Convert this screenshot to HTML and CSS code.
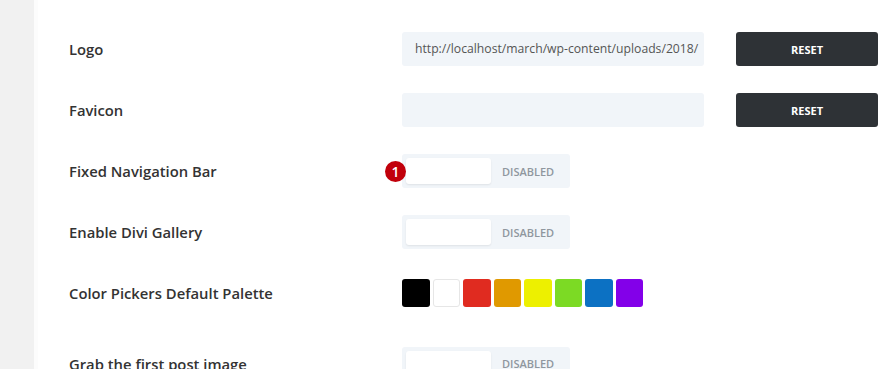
FILE: index.html
```html
<!DOCTYPE html>
<html lang="en">
<head>
  <meta charset="UTF-8">
  <title>Theme Options</title>
  <link rel="stylesheet" href="styles.css">
</head>
<body>
  <div class="layout">
    <div class="sidebar"></div>
    <div class="panel">
      <div class="row">
        <div class="label">Logo</div>
        <div class="field">
          <div class="text-input">http://localhost/march/wp-content/uploads/2018/</div>
          <button class="reset-btn">RESET</button>
        </div>
      </div>
      <div class="row">
        <div class="label">Favicon</div>
        <div class="field">
          <div class="text-input"></div>
          <button class="reset-btn">RESET</button>
        </div>
      </div>
      <div class="row">
        <div class="label">Fixed Navigation Bar</div>
        <div class="field">
          <div class="toggle">
            <span class="badge">1</span>
            <div class="knob"></div>
            <span class="toggle-text">DISABLED</span>
          </div>
        </div>
      </div>
      <div class="row">
        <div class="label">Enable Divi Gallery</div>
        <div class="field">
          <div class="toggle">
            <div class="knob"></div>
            <span class="toggle-text">DISABLED</span>
          </div>
        </div>
      </div>
      <div class="row palette-row">
        <div class="label">Color Pickers Default Palette</div>
        <div class="field palette">
          <span class="swatch" style="background:#000000"></span>
          <span class="swatch swatch-white" style="background:#ffffff"></span>
          <span class="swatch" style="background:#e02b20"></span>
          <span class="swatch" style="background:#e09900"></span>
          <span class="swatch" style="background:#edf000"></span>
          <span class="swatch" style="background:#7cda24"></span>
          <span class="swatch" style="background:#0c71c3"></span>
          <span class="swatch" style="background:#8300e9"></span>
        </div>
      </div>
      <div class="row">
        <div class="label">Grab the first post image</div>
        <div class="field">
          <div class="toggle">
            <div class="knob"></div>
            <span class="toggle-text">DISABLED</span>
          </div>
        </div>
      </div>
    </div>
  </div>
</body>
</html>
```

FILE: styles.css
```css
* {
  margin: 0; padding: 0; box-sizing: border-box;
}

body {
  background: #fff;
  font-family: 'Open Sans', 'Liberation Sans', sans-serif;
  overflow: hidden;
}

.layout {
  display: flex;
  height: 369px;
}

.sidebar {
  width: 34px;
  background: #f1f1f1;
  border-right: 4px solid #fcfcfc;
  box-sizing: content-box;
  flex-shrink: 0;
}

.panel {
  flex: 1;
  padding: 32px 0 0 31px;
  display: flex;
  flex-direction: column;
  gap: 27px;
}

.row {
  display: flex;
  align-items: center;
  min-height: 34px;
  flex-shrink: 0;
}

.palette-row {
  padding: 3px 0 5px;
  margin-bottom: 8px;
}

.label {
  width: 333px;
  font-size: 14.8px;
  font-weight: 600;
  color: #333;
}

.field {
  display: flex;
  align-items: center;
  gap: 32px;
}

.text-input {
  width: 302px;
  height: 34px;
  background: #f1f5f9;
  border-radius: 3px;
  padding: 0 8px 0 13px;
  font-size: 12.2px;
  line-height: 34px;
  color: #555;
  white-space: nowrap;
  overflow: hidden;
}

.reset-btn {
  width: 142px;
  height: 34px;
  background: #2e3236;
  color: #fff;
  border: none;
  border-radius: 3px;
  font-family: 'Open Sans', 'Liberation Sans', sans-serif;
  font-size: 11px;
  font-weight: 700;
}

.toggle {
  position: relative;
  width: 168px;
  height: 34px;
  background: #f1f5f9;
  border-radius: 3px;
  padding: 4px;
  display: flex;
  align-items: center;
}

.knob {
  width: 85px;
  height: 26px;
  background: #fff;
  border-radius: 3px;
  box-shadow: 0 1px 2px rgba(0, 0, 0, 0.08);
}

.toggle-text {
  margin-left: 11px;
  font-size: 11px;
  font-weight: 600;
  color: #8f979e;
}

.badge {
  position: absolute;
  left: -17px;
  top: 7px;
  width: 21px;
  height: 21px;
  border-radius: 50%;
  background: #c1000b;
  color: #fff;
  font-size: 14px;
  font-weight: 600;
  line-height: 21px;
  text-align: center;
}

.palette {
  gap: 3px;
}

.swatch {
  width: 27.5px;
  height: 27.5px;
  border-radius: 3px;
}

.swatch-white {
  border: 1px solid #e6e6e6;
}
```
